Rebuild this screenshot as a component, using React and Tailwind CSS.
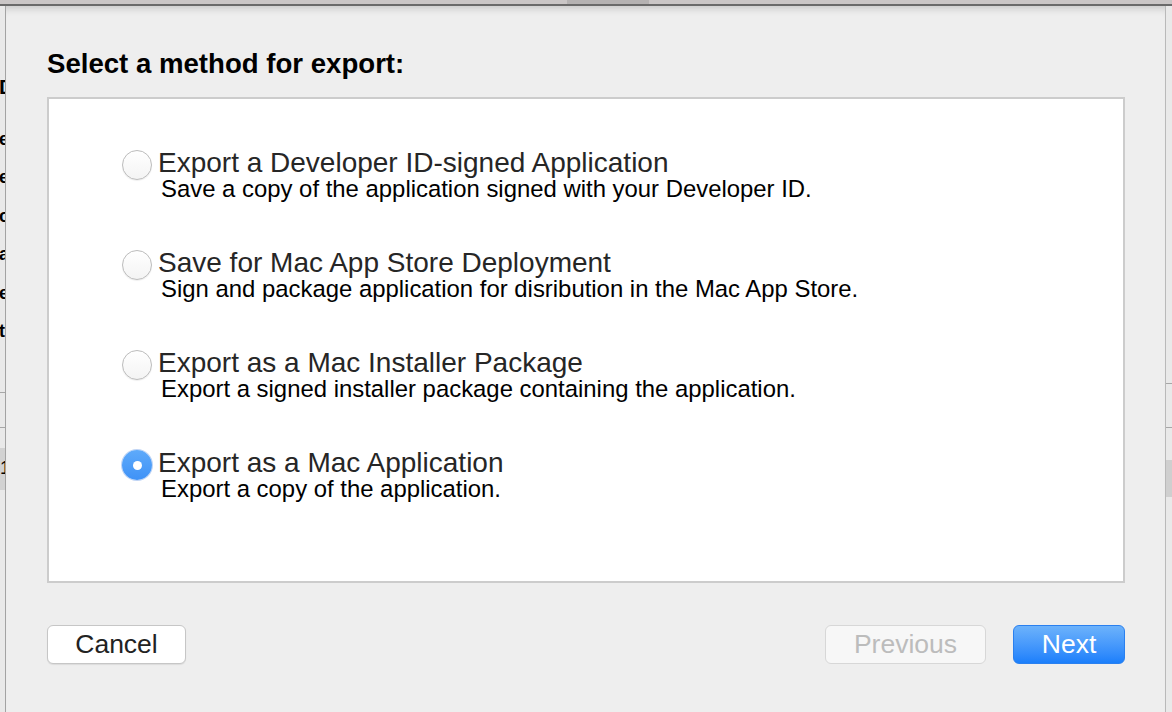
import React from 'react';

const options = [
  {
    id: 'devid',
    title: 'Export a Developer ID-signed Application',
    desc: 'Save a copy of the application signed with your Developer ID.',
  },
  {
    id: 'appstore',
    title: 'Save for Mac App Store Deployment',
    desc: 'Sign and package application for disribution in the Mac App Store.',
  },
  {
    id: 'installer',
    title: 'Export as a Mac Installer Package',
    desc: 'Export a signed installer package containing the application.',
  },
  {
    id: 'app',
    title: 'Export as a Mac Application',
    desc: 'Export a copy of the application.',
  },
];

// bits of the window behind the sheet that peek out on the left
const leftWords = ['ersion', 'ecurity', 'ompany', 'ame', 'ersion', 'ttribute'];

const Radio = ({ checked }) =>
  checked ? (
    <span className="mt-[1px] flex size-[30px] shrink-0 items-center justify-center rounded-full bg-gradient-to-b from-[#5eaafa] to-[#3f92f7] shadow-[0_0_0_1px_rgba(40,110,220,0.3)]">
      <span className="size-[9px] rounded-full bg-white" />
    </span>
  ) : (
    <span className="mt-[1px] size-[30px] shrink-0 rounded-full border border-[#bcbcbc] bg-gradient-to-b from-white to-[#f4f4f4] shadow-[0_1px_1px_rgba(0,0,0,0.07)]" />
  );

const App = () => {
  const [selected, setSelected] = React.useState('app');

  return (
    <div className="flex h-[712px] w-[1172px] flex-col overflow-hidden bg-[#e6e6e6] font-['Liberation_Sans',Arial,sans-serif] text-black">
      {/* window behind: title bar edge */}
      <div className="flex h-[4px] shrink-0 bg-[#cac6c6]">
        <div className="w-[567px]" />
        <div className="w-[82px] bg-[#b5b2b2]" />
      </div>
      <div className="h-[2px] shrink-0 bg-[#6a6a6a]" />

      <div className="flex min-h-0 flex-1">
        {/* left strip of background window */}
        <div className="flex w-[5px] shrink-0 flex-col bg-[#e9e9e9]">
          <div className="mt-[69px] flex h-[24px] overflow-hidden">
            <span className="ml-[-1px] whitespace-nowrap text-[21px] font-bold leading-[24px]">Details</span>
          </div>
          <div className="mt-[28.5px] flex flex-col gap-[16.6px]">
            {leftWords.map((w, i) => (
              <div key={i} className="flex h-[22px] overflow-hidden">
                <span className="ml-[-1px] whitespace-nowrap text-[18px] font-bold leading-[22px]">{w}</span>
              </div>
            ))}
          </div>
          <div className="mt-[49.5px] h-[1px] bg-[#a7a7a7]" />
          <div className="mt-[34px] h-[1px] bg-[#a7a7a7]" />
          <div className="mt-[20px] flex h-[42px] items-center overflow-hidden bg-[#d2d2d2]">
            <span className="whitespace-nowrap text-[18px]">1.0</span>
          </div>
        </div>
        <div className="w-[1px] shrink-0 bg-[#a3a3a3]" />

        {/* the sheet */}
        <div className="flex w-[1159px] shrink-0 flex-col bg-[#eeeeee] pl-[41px] pr-[40px] pt-[42px] shadow-[inset_0_9px_9px_-7px_rgba(0,0,0,0.18)]">
          <h1 className="text-[27.6px] font-bold leading-[32px]">Select a method for export:</h1>

          <div className="mt-[17px] h-[486px] border-2 border-[#cccccc] bg-white pl-[73px] pt-[50px]">
            <div className="flex flex-col gap-[48px]">
              {options.map((o) => (
                <label
                  key={o.id}
                  className="flex cursor-default items-start"
                  onClick={() => setSelected(o.id)}
                >
                  <Radio checked={selected === o.id} />
                  <div className="ml-[6px] flex flex-col">
                    <span className="whitespace-nowrap text-[28px] leading-[28px] text-[#262626]">{o.title}</span>
                    <span className="whitespace-nowrap pl-[3px] text-[23.9px] leading-[24px]">{o.desc}</span>
                  </div>
                </label>
              ))}
            </div>
          </div>

          <div className="mt-[42px] flex items-center">
            <button className="h-[39px] w-[139px] rounded-[6px] border border-[#c6c6c6] bg-white text-[26.5px] leading-none text-[#222] shadow-[0_1px_1px_rgba(0,0,0,0.08)]">
              Cancel
            </button>
            <div className="flex-1" />
            <button
              disabled
              className="h-[39px] w-[161px] rounded-[6px] border border-[#d7d7d7] bg-[#f7f7f7] text-[26.5px] leading-none text-[#bcbcbc]"
            >
              Previous
            </button>
            <button className="ml-[27px] h-[39px] w-[112px] rounded-[6px] border border-[#2a80ef] bg-gradient-to-b from-[#6cb2fb] to-[#1a7ffb] text-[26.5px] leading-none text-white">
              Next
            </button>
          </div>
        </div>

        <div className="w-[1px] shrink-0 bg-[#b9b9b9]" />
        {/* right strip of background window */}
        <div className="flex flex-1 flex-col bg-[#e9e9e9]">
          <div className="mt-[377px] h-[1px] bg-[#a7a7a7]" />
          <div className="mt-[43px] h-[1px] bg-[#a7a7a7]" />
          <div className="mt-[32px] h-[37px] bg-[#cfcfcf]" />
        </div>
      </div>
    </div>
  );
};

export default App;
